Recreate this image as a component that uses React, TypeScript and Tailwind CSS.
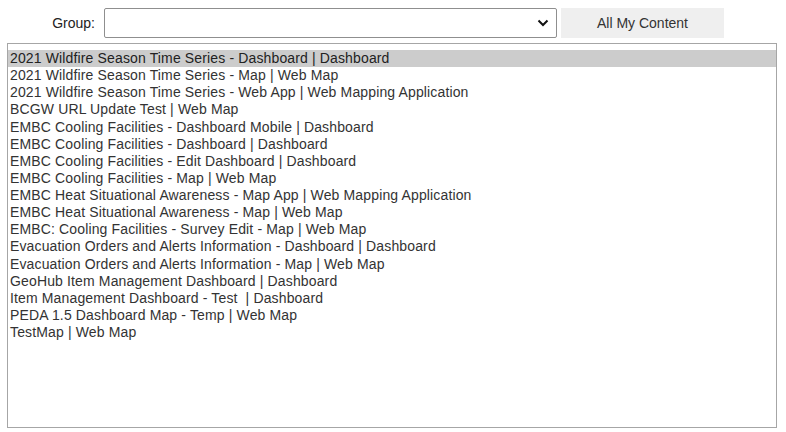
import React from 'react';

const items = [
  '2021 Wildfire Season Time Series - Dashboard | Dashboard',
  '2021 Wildfire Season Time Series - Map | Web Map',
  '2021 Wildfire Season Time Series - Web App | Web Mapping Application',
  'BCGW URL Update Test | Web Map',
  'EMBC Cooling Facilities - Dashboard Mobile | Dashboard',
  'EMBC Cooling Facilities - Dashboard | Dashboard',
  'EMBC Cooling Facilities - Edit Dashboard | Dashboard',
  'EMBC Cooling Facilities - Map | Web Map',
  'EMBC Heat Situational Awareness - Map App | Web Mapping Application',
  'EMBC Heat Situational Awareness - Map | Web Map',
  'EMBC: Cooling Facilities - Survey Edit - Map | Web Map',
  'Evacuation Orders and Alerts Information - Dashboard | Dashboard',
  'Evacuation Orders and Alerts Information - Map | Web Map',
  'GeoHub Item Management Dashboard | Dashboard',
  'Item Management Dashboard - Test  | Dashboard',
  'PEDA 1.5 Dashboard Map - Temp | Web Map',
  'TestMap | Web Map',
];

export default function App() {
  return (
    <div className="w-[786px] h-[432px] bg-white text-[14px] text-[#333] [font-family:'Liberation_Sans',Arial,sans-serif] pt-[8px]">
      {/* Toolbar */}
      <div className="flex items-center h-[30px]">
        <label className="w-[95px] text-right text-[#222]">Group:</label>
        <div className="ml-[9px] w-[453px] h-[30px] border border-[#8f8f8f] rounded-[2px] flex items-center justify-end pr-[6px]">
          <svg width="12" height="8" viewBox="0 0 12 8" className="mr-[1px]">
            <polyline points="1.5,1.5 6,6 10.5,1.5" fill="none" stroke="#111" strokeWidth="2" />
          </svg>
        </div>
        <button className="ml-[4px] w-[163px] h-[30px] bg-[#efefef] text-[#333] flex items-center justify-center">
          All My Content
        </button>
      </div>

      {/* List */}
      <div className="mt-[5px] ml-[7px] w-[770px] h-[385px] border border-[#a6a6a6] py-[6px] px-0 whitespace-pre tracking-[0.14px]">
        {items.map((item, i) => (
          <div
            key={i}
            className={`h-[17.125px] leading-[17px] pl-[2px] ${i === 0 ? 'bg-[#cccccc] text-[#222]' : ''}`}
          >
            {item}
          </div>
        ))}
      </div>
    </div>
  );
}
